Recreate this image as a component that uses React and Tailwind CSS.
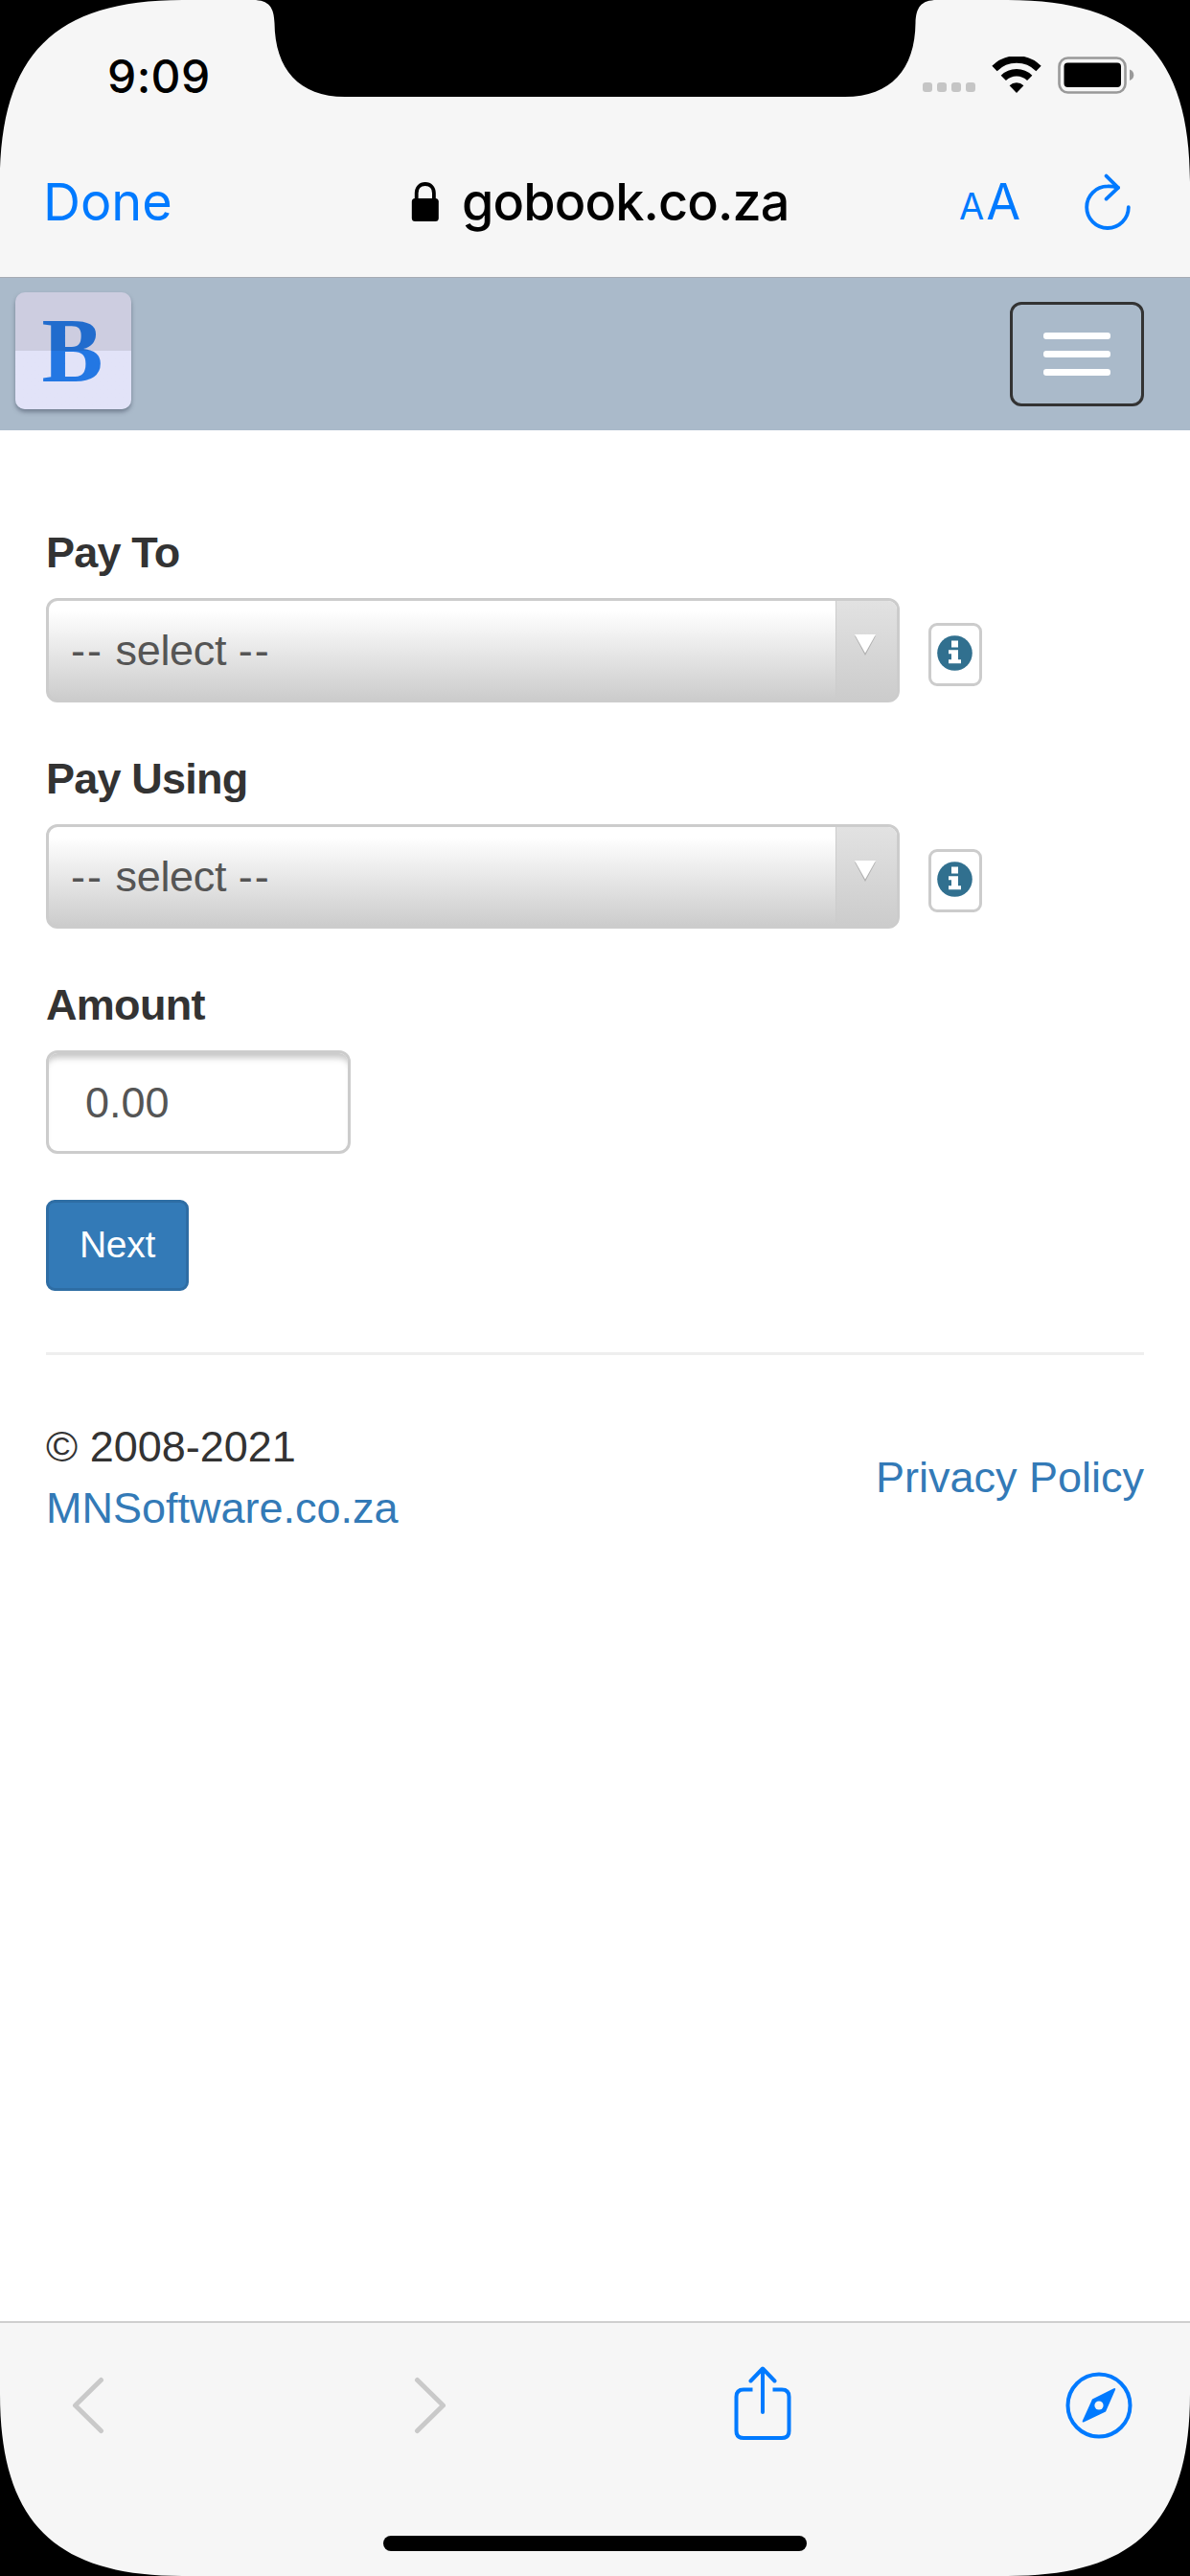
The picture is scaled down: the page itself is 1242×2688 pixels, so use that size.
import { useState } from 'react';

const SignalIcon = () => (
  <div className="flex gap-[5px] pt-[27px]">
    {[0, 1, 2, 3].map((dot) => (
      <span key={dot} className="w-[10px] h-[10px] rounded-[3px] bg-[#c5c5c5]" />
    ))}
  </div>
);

const WifiIcon = () => (
  <svg width="52" height="39" viewBox="0 0 52 39" fill="none">
    <path d="M3 12.5A32.5 32.5 0 0 1 49 12.5" stroke="#000" strokeWidth="7.5" />
    <path d="M12.3 22.3A19.5 19.5 0 0 1 39.7 22.3" stroke="#000" strokeWidth="7.5" />
    <path d="M26 38L18.6 30.2A10.5 10.5 0 0 1 33.4 30.2Z" fill="#000" />
  </svg>
);

const BatteryIcon = () => (
  <svg width="80" height="39" viewBox="0 0 80 39" fill="none">
    <rect x="1.5" y="1.5" width="69" height="36" rx="9" stroke="#999" strokeWidth="2.6" />
    <rect x="6.5" y="6.5" width="59.5" height="25.5" rx="4" fill="#000" />
    <path d="M75 13.5c3 1 4.3 3.3 4.3 5.7S78 24 75 25z" fill="#999" />
  </svg>
);

const LockIcon = () => (
  <svg width="30" height="42" viewBox="0 0 30 42" fill="none">
    <rect x="0.8" y="17" width="28" height="24" rx="3.5" fill="#000" />
    <path d="M5.7 19V11.5C5.7 5.5 9.5 2 14.8 2s9.1 3.5 9.1 9.500V19" stroke="#000" strokeWidth="3.8" />
  </svg>
);

const ReloadIcon = () => (
  <svg width="50" height="60" viewBox="0 0 50 60" fill="none" stroke="#007aff" strokeWidth="3.8" strokeLinecap="round" strokeLinejoin="round">
    <path d="M46.8 35.2A21.8 21.8 0 1 1 25 13.4Q30 13.2 36 14.8" />
    <path d="M23.6 2.6L36 14.8L23.6 26.6" />
  </svg>
);

const InfoIcon = () => (
  <svg width="37" height="37" viewBox="0 0 37 37">
    <circle cx="18.5" cy="18.5" r="18.3" fill="#31708f" />
    <path d="M15 5.5h7v7h-7zM12 15.2h10v10h3v4H12v-4h3v-6h-3z" fill="#fff" />
  </svg>
);

const ShareIcon = () => (
  <svg width="60" height="78" viewBox="0 0 60 78" fill="none" stroke="#007aff" strokeWidth="4">
    <path d="M19.5 24.500H10Q2.5 24.5 2.5 32V67.5Q2.5 75 10 75H50Q57.5 75 57.5 67.500V32Q57.5 24.5 50 24.500H40.5" />
    <path d="M30 3V48M17.5 15.500L30 2.500L42.5 15.5" strokeLinecap="round" strokeLinejoin="round" />
  </svg>
);

const CompassIcon = () => (
  <svg width="70" height="70" viewBox="0 0 70 70" fill="none">
    <circle cx="35" cy="35" r="32.5" stroke="#007aff" strokeWidth="4" />
    <path d="M50.5 17.3Q52.8 16.500 52 18.800L42 41.500L19.5 52.300Q17 53.200 17.8 50.900L28 28.500Z" fill="#007aff" />
    <circle cx="35" cy="35" r="4.6" fill="#f6f6f6" />
  </svg>
);

const SelectField = ({ label, className }) => (
  <div className={className}>
    <p className="font-bold text-[#333] h-[64px] leading-[64px] tracking-[-0.8px]">{label}</p>
    <div className="flex mt-[15px]">
      <div className="flex w-[891px] h-[109px] border-[3px] border-[#ccc] rounded-[12px] overflow-hidden bg-linear-to-b from-white from-10% to-[#ccc]">
        <span className="flex-1 pl-[23px] leading-[104px] text-[#555]">
          <span className="tracking-[2px]">--</span> <span className="tracking-[-0.3px]">select</span> <span className="tracking-[2px]">--</span>
        </span>
        <div className="w-[64px] border-l border-[#ccc] bg-linear-to-b from-[#e2e2e2] to-[#ccc]">
          <svg className="mt-[34px] ml-[18px]" width="24" height="24" viewBox="0 0 24 24">
            <path d="M1 2.5h22L12 23z" fill="#b0b0b0" />
            <path d="M1 1h22L12 20.500z" fill="#fff" />
          </svg>
        </div>
      </div>
      <button className="ml-[30px] mt-[26px] w-[56px] h-[66px] border-[3px] border-[#ccc] rounded-[9px] pl-[6px] pt-[10px] flex items-start">
        <InfoIcon />
      </button>
    </div>
  </div>
);

// Black phone bezel: rounded screen corners and the notch
const Bezel = () => (
  <svg className="absolute inset-0 pointer-events-none" width="1242" height="2688" viewBox="0 0 1242 2688">
    <path d="M0 0H190C57 0 0 57 0 190Z" />
    <path d="M1242 0H1052C1185 0 1242 57 1242 190Z" />
    <path d="M0 2688H190C57 2688 0 2631 0 2498Z" />
    <path d="M1242 2688H1052C1185 2688 1242 2631 1242 2498Z" />
    <path d="M264 0C281 0 286 8 286.5 24C287 72 312 101 360 101H882C930 101 955 72 955.5 24C956 8 961 0 978 0Z" />
  </svg>
);

const App = () => {
  const [amount, setAmount] = useState('0.00');

  return (
    <div className="relative w-[1242px] h-[2688px] bg-white flex flex-col overflow-hidden font-['Liberation_Sans',sans-serif] text-[45px]">
      {/* Status bar and browser header */}
      <header className="h-[290px] shrink-0 bg-[#f6f6f6] border-b border-[#a5abb3] font-[Inter,sans-serif]">
        <div className="flex justify-between h-[132px] pt-[59px] pl-[112px] pr-[58px]">
          <span className="text-[48px] leading-[41px] font-medium tracking-[0.4px]">9:09</span>
          <div className="flex items-start">
            <SignalIcon />
            <div className="ml-[17px]"><WifiIcon /></div>
            <div className="ml-[17px]"><BatteryIcon /></div>
          </div>
        </div>
        <div className="flex items-center h-[157px] pl-[45px] pr-[60px] pt-[1px]">
          <span className="w-[384px] text-[54px] leading-[60px] text-[#007aff]">Done</span>
          <LockIcon />
          <span className="ml-[23px] w-[519px] text-[54px] leading-[60px] font-medium tracking-[-0.9px]">gobook.co.za</span>
          <div className="w-[130px] flex items-baseline gap-[2px] pt-[3px] text-[#007aff] leading-[60px]">
            <span className="text-[38px]">A</span>
            <span className="text-[52px]">A</span>
          </div>
          <ReloadIcon />
        </div>
      </header>

      {/* Site navbar */}
      <nav className="h-[159px] shrink-0 bg-[#aabaca] flex items-start justify-between pl-[16px] pr-[48px]">
        <div className="mt-[15px] w-[121px] h-[122px] rounded-[10px] bg-linear-to-b from-[#cdcde0] from-50% to-[#e2e3f8] to-50% shadow-[0_3px_4px_rgba(60,70,90,0.5)] flex justify-center">
          <span className="font-['Liberation_Serif',serif] font-bold text-[96px] leading-[122px] -ml-[2px] bg-linear-to-b from-[#216ccd] from-50% to-[#2377e3] to-50% bg-clip-text text-transparent">B</span>
        </div>
        <button className="mt-[25px] w-[140px] h-[109px] border-[3px] border-[#333] rounded-[12px] flex flex-col items-center justify-center gap-[12px]">
          <span className="w-[70px] h-[7px] rounded-[3px] bg-white" />
          <span className="w-[70px] h-[7px] rounded-[3px] bg-white" />
          <span className="w-[70px] h-[7px] rounded-[3px] bg-white" />
        </button>
      </nav>

      {/* Payment form */}
      <main className="flex-1 px-[48px] pt-[96px]">
        <SelectField label="Pay To" />
        <SelectField label="Pay Using" className="mt-[48px]" />
        <p className="mt-[48px] font-bold text-[#333] h-[64px] leading-[64px] tracking-[-0.7px]">Amount</p>
        <input
          className="block mt-[15px] w-[318px] h-[108px] border-[3px] border-[#ccc] rounded-[12px] pl-[38px] pt-[2px] text-[#555] shadow-[inset_0_9px_6px_-4px_rgba(0,0,0,0.22)]"
          value={amount}
          onChange={(e) => setAmount(e.target.value)}
        />
        <button className="block mt-[48px] w-[149px] h-[95px] bg-[#337ab7] border-[3px] border-[#2e6da4] rounded-[9px] text-white text-[39px] tracking-[-0.3px]">Next</button>
        <hr className="mt-[64px] border-t-[3px] border-[#eee]" />
        <footer className="flex items-center justify-between mt-[64px] leading-[64px]">
          <div>
            <p className="text-[#333]">© 2008-2021</p>
            <a className="text-[#337ab7]">MNSoftware.co.za</a>
          </div>
          <a className="text-[#337ab7]">Privacy Policy</a>
        </footer>
      </main>

      {/* Browser toolbar */}
      <footer className="h-[266px] shrink-0 bg-[#f6f6f6] border-t-2 border-[#cfcfcf] flex flex-col items-center">
        <div className="w-full flex items-start pt-[45px] pl-[74px]">
          <svg className="mt-[11px]" width="35" height="60" viewBox="0 0 35 60" fill="none" stroke="#c9c9c9" strokeWidth="5" strokeLinecap="round" strokeLinejoin="round">
            <path d="M31.5 3.500L4.5 30L31.5 56.5" />
          </svg>
          <svg className="mt-[11px] ml-[323px]" width="35" height="60" viewBox="0 0 35 60" fill="none" stroke="#c9c9c9" strokeWidth="5" strokeLinecap="round" strokeLinejoin="round">
            <path d="M3.5 3.500L30.5 30L3.5 56.5" />
          </svg>
          <div className="ml-[299px]"><ShareIcon /></div>
          <div className="mt-[6px] ml-[286px]"><CompassIcon /></div>
        </div>
        <div className="mt-auto mb-[26px] w-[442px] h-[16px] rounded-full bg-black" />
      </footer>
      <Bezel />
    </div>
  );
};

export default App;
